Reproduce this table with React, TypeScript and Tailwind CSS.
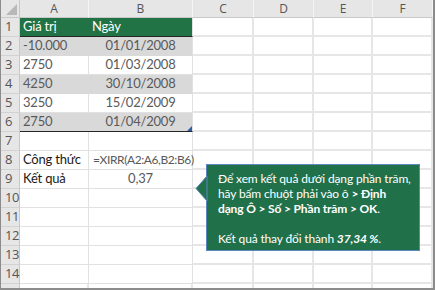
import React from 'react';

const COLS = ['A', 'B', 'C', 'D', 'E', 'F'];

type Cell = { a?: string; b?: string; fill?: 'green' | 'gray'; dark?: boolean };

const rows: Cell[] = [
  { a: 'Giá trị', b: 'Ngày', fill: 'green' },
  { a: '-10.000', b: '01/01/2008', fill: 'gray' },
  { a: '2750', b: '01/03/2008' },
  { a: '4250', b: '30/10/2008', fill: 'gray' },
  { a: '3250', b: '15/02/2009' },
  { a: '2750', b: '01/04/2009', fill: 'gray' },
  {},
  { a: 'Công thức', b: '=XIRR(A2:A6,B2:B6)', dark: true },
  { a: 'Kết quả', b: '0,37', dark: true },
  {},
  {},
  {},
  {},
  {},
];

const cellFont = { fontFamily: 'Lato, "Liberation Sans", sans-serif' };
const uiFont = { fontFamily: '"Open Sans", "Liberation Sans", sans-serif' };

export default function App() {
  return (
    <div className="relative h-[290px] w-[435px] overflow-hidden bg-white border-l border-r-2 border-b-2 border-[#8c8c8c]">
      <div className="grid grid-cols-[19px_69px_104px_61px_60px_59px_1fr] grid-rows-[18px_repeat(14,19px)_1fr] h-full">
        {/* corner */}
        <div className="relative bg-[#e6e6e6] border-r border-b border-[#c8c8c8]">
          <div
            className="absolute right-[2px] bottom-[2px] h-0 w-0"
            style={{ borderBottom: '11px solid #b8b8b8', borderLeft: '11px solid transparent' }}
          />
        </div>
        {COLS.map((c) => (
          <div
            key={c}
            style={uiFont}
            className="flex items-center justify-center bg-[#e6e6e6] border-r border-b border-r-[#f4f4f4] border-b-[#c8c8c8] text-[12px] text-[#555]"
          >
            {c}
          </div>
        ))}

        {rows.map((r, i) => {
          const n = i + 1;
          const bg = r.fill === 'green' ? 'bg-[#217346]' : r.fill === 'gray' ? 'bg-[#d9d9d9]' : 'bg-white';
          const lineB =
            n === 1 || n === 6
              ? 'border-b border-b-[#262626]'
              : r.fill
              ? 'border-b border-b-transparent'
              : 'border-b border-b-[#e1e1e1]';
          const textCol = r.fill === 'green' ? 'text-white' : r.dark ? 'text-[#1a1a1a]' : 'text-[#595959]';
          return (
            <React.Fragment key={n}>
              <div
                style={uiFont}
                className="flex items-center pl-[4px] bg-[#e6e6e6] border-r border-b border-r-[#c8c8c8] border-b-[#d2d2d2] text-[13px] text-[#555] tracking-[-0.5px]"
              >
                {n}
              </div>
              <div
                style={cellFont}
                className={`flex items-center pl-[3px] whitespace-nowrap text-[13px] tracking-[-0.2px] ${bg} ${lineB} ${
                  r.fill ? '' : 'border-r border-r-[#e1e1e1]'
                } ${textCol}`}
              >
                {r.a}
              </div>
              <div
                style={cellFont}
                className={`relative flex items-center whitespace-nowrap ${bg} ${lineB} border-r border-r-[#e1e1e1] ${textCol} ${
                  n === 1
                    ? 'pl-[3px] text-[13px] tracking-[-0.2px]'
                    : n === 8
                    ? 'pl-[4px] text-[12px] tracking-[-0.4px] text-[#595959]'
                    : n === 9
                    ? 'justify-center text-[13px] tracking-[-0.2px] text-[#595959]'
                    : 'justify-center text-[13px] tracking-[-0.2px]'
                }`}
              >
                {r.b}
                {n === 6 && (
                  <div
                    className="absolute right-0 bottom-0 h-0 w-0"
                    style={{ borderBottom: '5px solid #2f5fa8', borderLeft: '5px solid transparent' }}
                  />
                )}
              </div>
              {[0, 1, 2, 3].map((k) => (
                <div key={k} className="border-r-2 border-b-2 border-[#e6e6e6]" />
              ))}
            </React.Fragment>
          );
        })}
        <div className="bg-[#e6e6e6] border-r border-[#c8c8c8]" />
        {[0, 1, 2, 3, 4, 5].map((k) => (
          <div key={k} className="border-r-2 border-[#e6e6e6]" />
        ))}
      </div>

      {/* callout */}
      <div className="absolute left-[205px] top-[164px] w-[214px] h-[87px]">
        <svg className="absolute left-[-11px] top-[12px]" width="13" height="25" viewBox="0 0 13 25">
          <polygon points="12,0 1,12.5 12,25" fill="#20704a" stroke="#5b86c0" strokeWidth="1" />
        </svg>
        <div
          style={cellFont}
          className="h-full w-full bg-[#20704a] border border-[#5b86c0] pl-[11px] pt-[6px] text-[12px] leading-[15px] tracking-[-0.15px] text-white whitespace-nowrap"
        >
          <div>Để xem kết quả dưới dạng phần trăm,</div>
          <div>
            hãy bấm chuột phải vào ô <b>&gt; Định</b>
          </div>
          <div>
            <b>dạng Ô &gt; Số &gt; Phần trăm &gt; OK</b>.
          </div>
          <div className="h-[15px]" />
          <div>
            Kết quả thay đổi thành <b><i>37,34 %</i></b>.
          </div>
        </div>
      </div>
    </div>
  );
}
